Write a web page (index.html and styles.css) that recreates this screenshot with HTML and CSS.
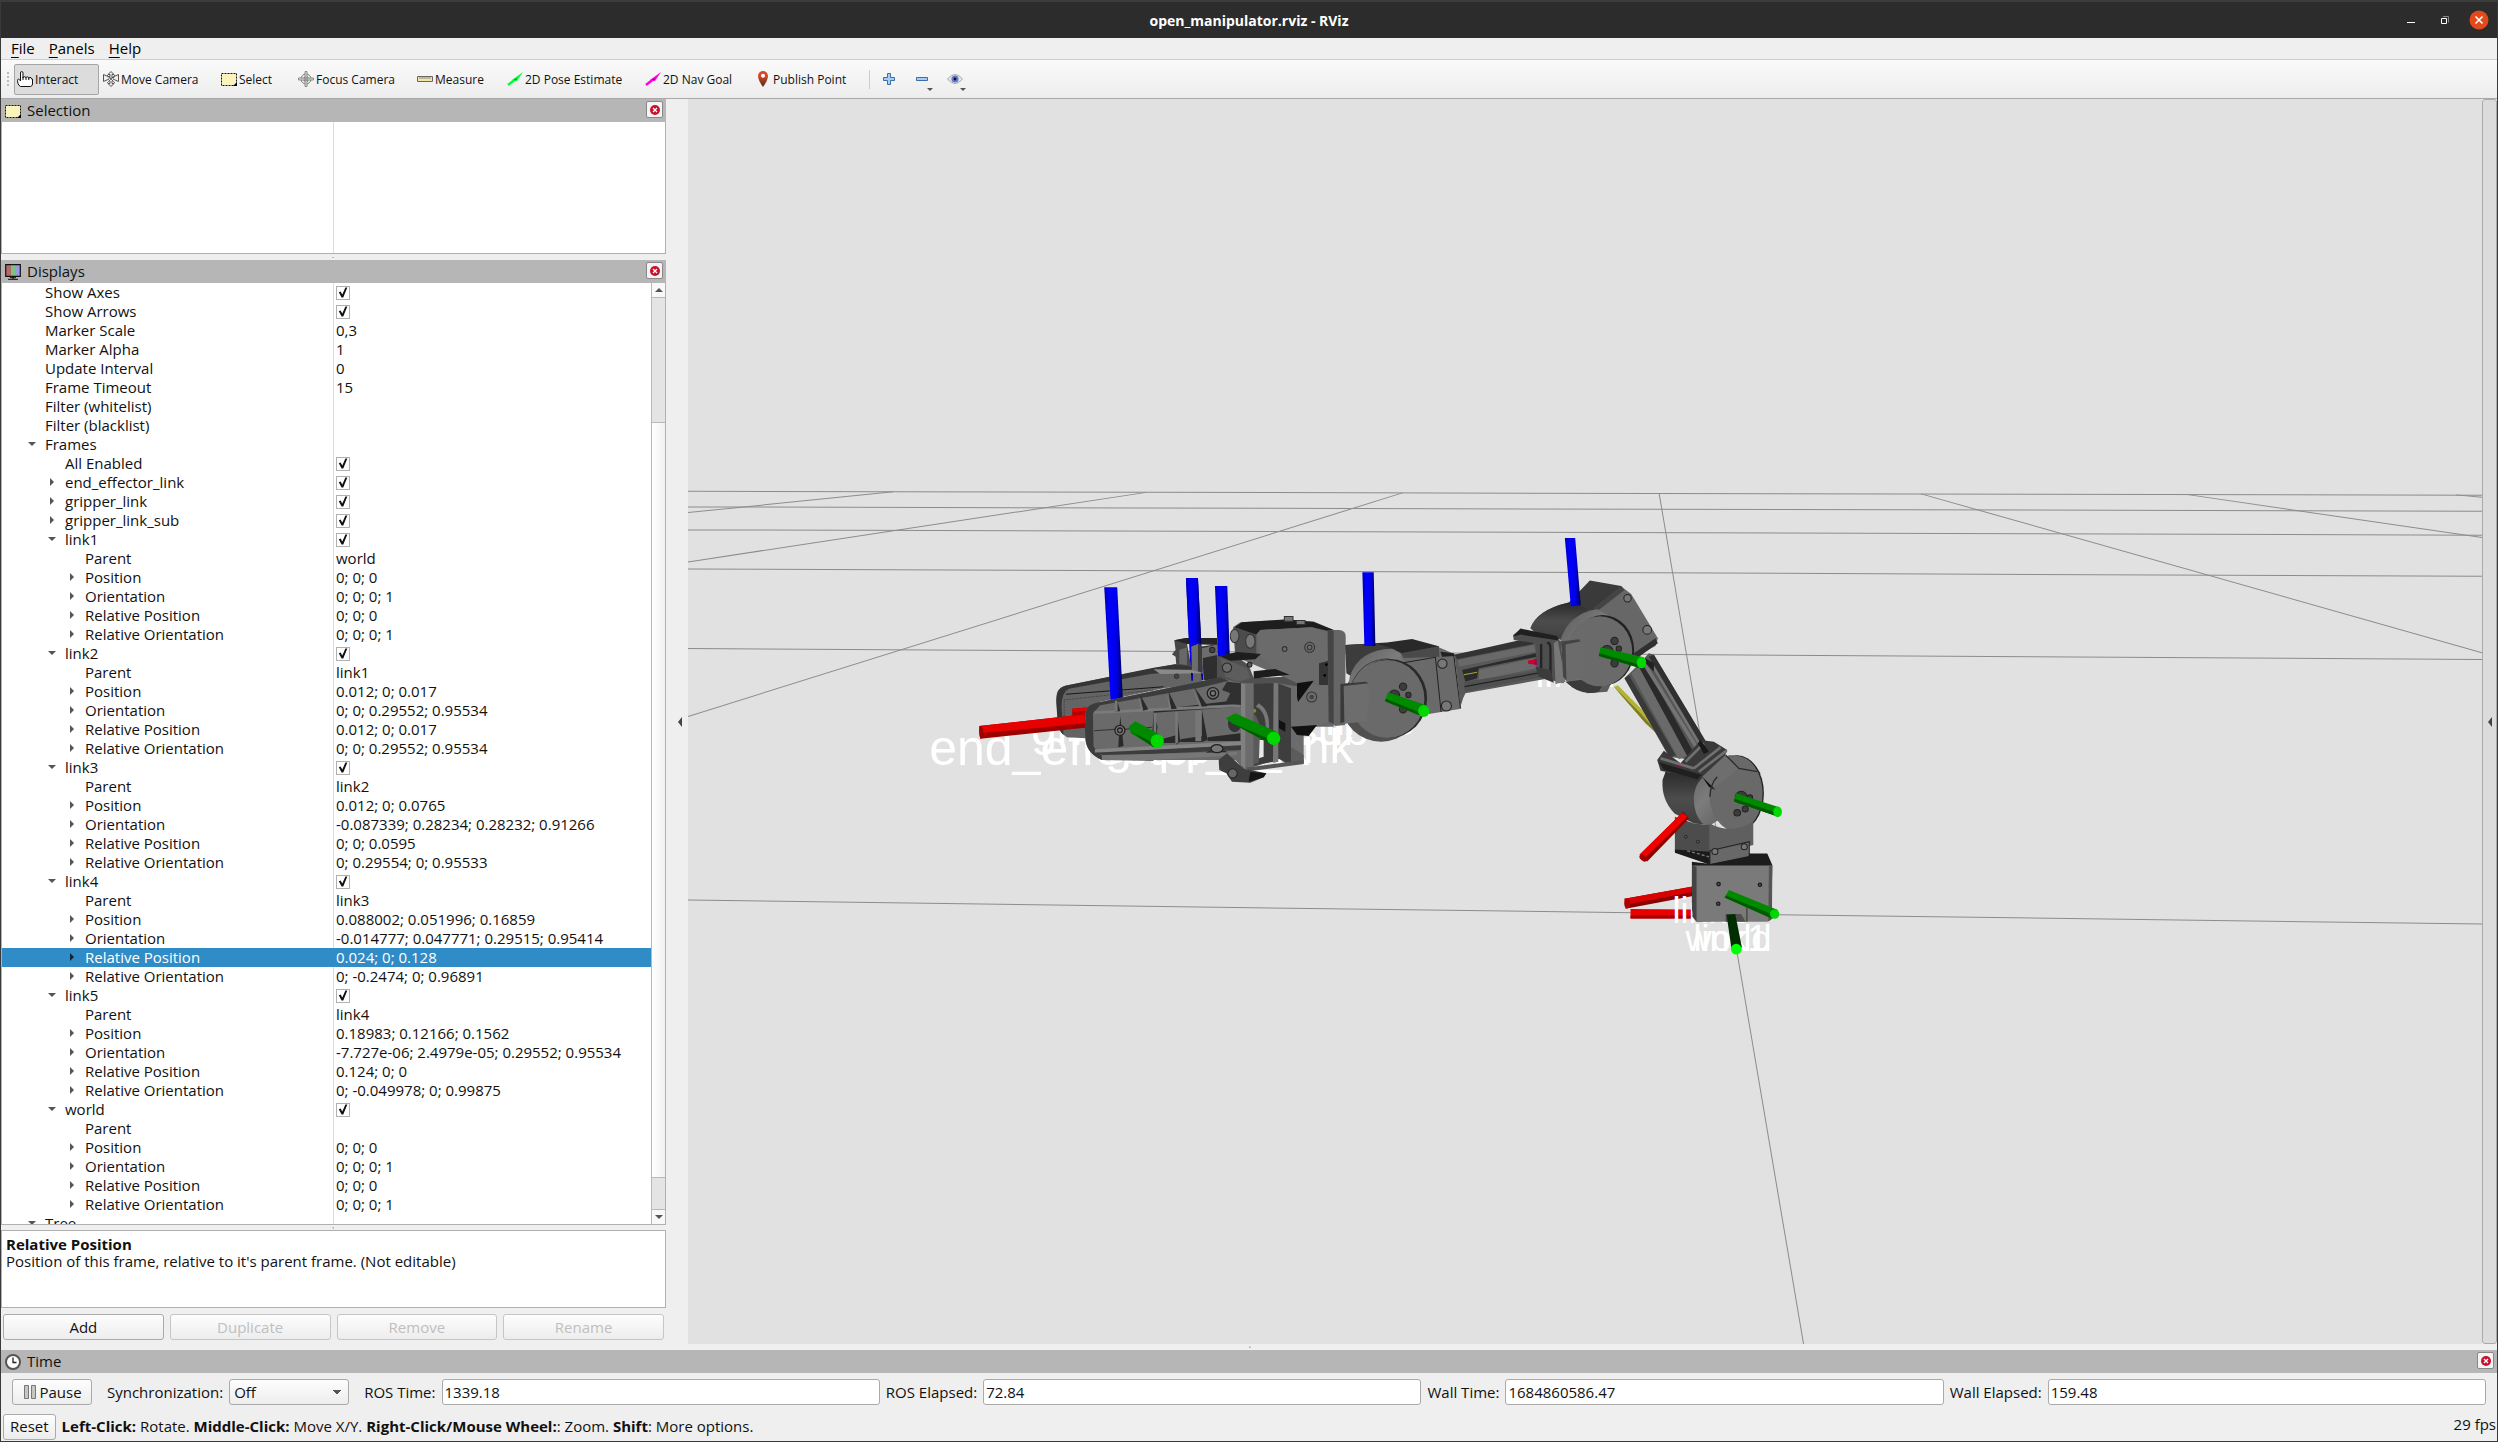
FILE: index.html
```html
<!DOCTYPE html>
<html lang="en">
<head>
<meta charset="utf-8">
<title>open_manipulator.rviz - RViz</title>
<link rel="stylesheet" href="styles.css">
</head>
<body>
<svg class="sprite" aria-hidden="true">
  <symbol id="i-select" viewBox="0 0 16 16"><path d="M.5 2.500h15v12H.5z" fill="#faf3bb"/><path d="M.5 2.500h15v12H.5z" fill="none" stroke="#111" stroke-dasharray="2 1"/><path d="M16 11v4h-4z" fill="#000"/></symbol>
  <symbol id="i-close" viewBox="0 0 16 16"><circle cx="8" cy="8" r="5" fill="#c8102e"/><path d="M6 6l4 4M10 6l-4 4" stroke="#fff" stroke-width="1.300"/></symbol>
</svg>
<div class="window">
  <header class="titlebar">
    <h1>open_manipulator.rviz - RViz</h1>
    <div class="window-buttons">
      <button aria-label="Minimize"><svg width="20" height="20" viewBox="0 0 20 20"><path d="M6 12.500h8" stroke="#fff"/></svg></button>
      <button aria-label="Restore"><svg width="20" height="20" viewBox="0 0 20 20"><path d="M6.500 8.500h5v5h-5z" fill="none" stroke="#fff"/><path d="M8 6.500h5.500v6" fill="none" stroke="#888"/></svg></button>
      <button aria-label="Close"><svg width="20" height="20" viewBox="0 0 20 20"><circle cx="10" cy="10" r="9.500" fill="#e2491b"/><path d="M6.500 6.500l7 7M13.500 6.500l-7 7" stroke="#fff" stroke-width="1.600"/></svg></button>
    </div>
  </header>

  <nav class="menubar"><a href="#file"><u>F</u>ile</a><a href="#panels"><u>P</u>anels</a><a href="#help"><u>H</u>elp</a></nav>

  <div class="toolbar">
    <span class="grip"></span>
    <button class="tool active"><svg width="16" height="16" viewBox="0 0 16 16"><path d="M3.500 10V2q0-1.500 1.200-1.500T6 2v5q0-1.300 1.400-1.300T9 7q0-1.200 1.300-1.200T11.800 7.500q.2-1.200 1.300-1.200 1.400.2 1.400 1.700h1v5q0 2-2 2.500h-10q-2-1-2.500-3L.5 9.500q0-1.300 1-1.300T3.500 10z" fill="#fff" stroke="#111"/><path d="M6 6v3M9 7v2M11.800 7v2" stroke="#111"/></svg>Interact</button>
    <button class="tool"><svg width="16" height="16" viewBox="0 0 16 16" fill="#eee" stroke="#555"><path d="M8 .5l3 3H9v3h2v-1l4.500-2v7L11 8.500h-.5L9 10v2.500h2l-3 3-3-3h2V10L5.500 8.500H5l-4.500 2v-7L5 5.500h2v-2H5z"/><path d="M4 4l8 8M12 4l-8 8M5 7h6" fill="none" stroke-width=".8"/></svg>Move Camera</button>
    <button class="tool"><svg width="16" height="16"><use href="#i-select"/></svg>Select</button>
    <button class="tool"><svg width="16" height="16" viewBox="0 0 16 16" fill="none" stroke="#777"><circle cx="8" cy="8" r="5"/><circle cx="8" cy="8" r="2.500"/><path d="M7 .5h2v15H7zM.5 7h15v2H.5z" fill="#ddd" stroke-width=".8"/></svg>Focus Camera</button>
    <button class="tool"><svg width="16" height="16" viewBox="0 0 16 16"><path d="M.5 5.500h15v5H.5z" fill="#efe6a8" stroke="#666"/><path d="M3 6v2M5 6v2M7 6v2M9 6v2M11 6v2M13 6v2" stroke="#777" stroke-width=".8"/></svg>Measure</button>
    <button class="tool"><svg width="16" height="16" viewBox="0 0 16 16"><path d="M1 14l7-5.500" stroke="#0f3" stroke-width="2.400"/><path d="M5 9L16 1l-6 9z" fill="#0f3"/><path d="M7 8l3-.5-1 2" fill="#074"/></svg>2D Pose Estimate</button>
    <button class="tool"><svg width="16" height="16" viewBox="0 0 16 16"><path d="M1 14l7-5.500" stroke="#f0d" stroke-width="2.400"/><path d="M5 9L16 1l-6 9z" fill="#f0d"/><path d="M7 8l3-.5-1 2" fill="#706"/></svg>2D Nav Goal</button>
    <button class="tool"><svg width="16" height="16" viewBox="0 0 16 16"><linearGradient id="pin" x2="0" y2="1"><stop offset=".3" stop-color="#d8492a"/><stop offset="1" stop-color="#4a2a10"/></linearGradient><path d="M8 16Q3 9 3 5a5 5 0 0 1 10 0q0 4-5 11z" fill="url(#pin)"/><circle cx="8" cy="4.800" r="2" fill="#fff"/></svg>Publish Point</button>
    <span class="separator"></span>
    <button class="tool icon-only" aria-label="Add tool"><svg width="16" height="16" viewBox="0 0 16 16"><path d="M6.500 2.500h3v4h4v3h-4v4h-3v-4h-4v-3h4z" fill="#a9cdf0" stroke="#3a6ea8"/></svg></button>
    <button class="tool icon-only drop" aria-label="Remove tool"><svg width="16" height="16" viewBox="0 0 16 16"><path d="M2.500 6.500h11v3h-11z" fill="#a9cdf0" stroke="#3a6ea8"/></svg></button>
    <button class="tool icon-only drop" aria-label="Toolbar visibility"><svg width="16" height="16" viewBox="0 0 16 16"><path d="M.5 8Q8-1 15.500 8 8 17 .5 8z" fill="#e6e6e6" stroke="#a8a8a8"/><circle cx="8" cy="8" r="3.600" fill="#5f7bd0"/><circle cx="8" cy="8" r="1.400" fill="#111"/></svg></button>
  </div>

  <main class="workspace">
    <aside class="sidebar">
      <section class="selection">
        <div class="dock-title"><svg width="16" height="16"><use href="#i-select"/></svg><h2>Selection</h2><button class="dock-close" aria-label="Close Selection"><svg width="16" height="16"><use href="#i-close"/></svg></button></div>
        <div class="selection-body"><div></div><div></div></div>
      </section>
      <div class="splitter"></div>
      <section class="displays">
        <div class="dock-title"><svg width="16" height="16" viewBox="0 0 16 16"><path d="M1 1h5v11H1z" fill="#b56a6a"/><path d="M6 1h5v11H6z" fill="#7ec47e"/><path d="M10 1h5v11h-5z" fill="#9a9ae0"/><path d="M.7.700h14.600v11.600H.7z" fill="none" stroke="#111" stroke-width="1.200"/><path d="M8 12v3M3 15.300h10M5 13.700h6" stroke="#111"/></svg><h2>Displays</h2><button class="dock-close" aria-label="Close Displays"><svg width="16" height="16"><use href="#i-close"/></svg></button></div>
        <div class="tree">
          <div class="tree-view">
          <table>
            <colgroup><col class="name-col"><col></colgroup>
            <tbody>
            <tr><td class="l1">Show Axes</td><td><input type="checkbox" checked aria-label="Show Axes"></td></tr>
            <tr><td class="l1">Show Arrows</td><td><input type="checkbox" checked aria-label="Show Arrows"></td></tr>
            <tr><td class="l1">Marker Scale</td><td>0,3</td></tr>
            <tr><td class="l1">Marker Alpha</td><td>1</td></tr>
            <tr><td class="l1">Update Interval</td><td>0</td></tr>
            <tr><td class="l1">Frame Timeout</td><td>15</td></tr>
            <tr><td class="l1">Filter (whitelist)</td><td></td></tr>
            <tr><td class="l1">Filter (blacklist)</td><td></td></tr>
            <tr><td class="l1 open">Frames</td><td></td></tr>
            <tr><td class="l2">All Enabled</td><td><input type="checkbox" checked aria-label="All Enabled"></td></tr>
            <tr><td class="l2 shut">end_effector_link</td><td><input type="checkbox" checked aria-label="end_effector_link"></td></tr>
            <tr><td class="l2 shut">gripper_link</td><td><input type="checkbox" checked aria-label="gripper_link"></td></tr>
            <tr><td class="l2 shut">gripper_link_sub</td><td><input type="checkbox" checked aria-label="gripper_link_sub"></td></tr>
            <tr><td class="l2 open">link1</td><td><input type="checkbox" checked aria-label="link1"></td></tr>
            <tr><td class="l3">Parent</td><td>world</td></tr>
            <tr><td class="l3 shut">Position</td><td>0; 0; 0</td></tr>
            <tr><td class="l3 shut">Orientation</td><td>0; 0; 0; 1</td></tr>
            <tr><td class="l3 shut">Relative Position</td><td>0; 0; 0</td></tr>
            <tr><td class="l3 shut">Relative Orientation</td><td>0; 0; 0; 1</td></tr>
            <tr><td class="l2 open">link2</td><td><input type="checkbox" checked aria-label="link2"></td></tr>
            <tr><td class="l3">Parent</td><td>link1</td></tr>
            <tr><td class="l3 shut">Position</td><td>0.012; 0; 0.017</td></tr>
            <tr><td class="l3 shut">Orientation</td><td>0; 0; 0.29552; 0.95534</td></tr>
            <tr><td class="l3 shut">Relative Position</td><td>0.012; 0; 0.017</td></tr>
            <tr><td class="l3 shut">Relative Orientation</td><td>0; 0; 0.29552; 0.95534</td></tr>
            <tr><td class="l2 open">link3</td><td><input type="checkbox" checked aria-label="link3"></td></tr>
            <tr><td class="l3">Parent</td><td>link2</td></tr>
            <tr><td class="l3 shut">Position</td><td>0.012; 0; 0.0765</td></tr>
            <tr><td class="l3 shut">Orientation</td><td>-0.087339; 0.28234; 0.28232; 0.91266</td></tr>
            <tr><td class="l3 shut">Relative Position</td><td>0; 0; 0.0595</td></tr>
            <tr><td class="l3 shut">Relative Orientation</td><td>0; 0.29554; 0; 0.95533</td></tr>
            <tr><td class="l2 open">link4</td><td><input type="checkbox" checked aria-label="link4"></td></tr>
            <tr><td class="l3">Parent</td><td>link3</td></tr>
            <tr><td class="l3 shut">Position</td><td>0.088002; 0.051996; 0.16859</td></tr>
            <tr><td class="l3 shut">Orientation</td><td>-0.014777; 0.047771; 0.29515; 0.95414</td></tr>
            <tr class="selected"><td class="l3 shut">Relative Position</td><td>0.024; 0; 0.128</td></tr>
            <tr><td class="l3 shut">Relative Orientation</td><td>0; -0.2474; 0; 0.96891</td></tr>
            <tr><td class="l2 open">link5</td><td><input type="checkbox" checked aria-label="link5"></td></tr>
            <tr><td class="l3">Parent</td><td>link4</td></tr>
            <tr><td class="l3 shut">Position</td><td>0.18983; 0.12166; 0.1562</td></tr>
            <tr><td class="l3 shut">Orientation</td><td>-7.727e-06; 2.4979e-05; 0.29552; 0.95534</td></tr>
            <tr><td class="l3 shut">Relative Position</td><td>0.124; 0; 0</td></tr>
            <tr><td class="l3 shut">Relative Orientation</td><td>0; -0.049978; 0; 0.99875</td></tr>
            <tr><td class="l2 open">world</td><td><input type="checkbox" checked aria-label="world"></td></tr>
            <tr><td class="l3">Parent</td><td></td></tr>
            <tr><td class="l3 shut">Position</td><td>0; 0; 0</td></tr>
            <tr><td class="l3 shut">Orientation</td><td>0; 0; 0; 1</td></tr>
            <tr><td class="l3 shut">Relative Position</td><td>0; 0; 0</td></tr>
            <tr><td class="l3 shut">Relative Orientation</td><td>0; 0; 0; 1</td></tr>
            <tr><td class="l1 open">Tree</td><td></td></tr>
            </tbody>
          </table>
          </div>
          <div class="scrollbar"><span class="step up"></span><span class="track before"></span><span class="thumb"></span><span class="track after"></span><span class="step down"></span></div>
        </div>
        <div class="splitter small"></div>
        <div class="description"><b>Relative Position</b><p>Position of this frame, relative to it's parent frame. (Not editable)</p></div>
        <div class="display-buttons"><button class="btn">Add</button><button class="btn" disabled>Duplicate</button><button class="btn" disabled>Remove</button><button class="btn" disabled>Rename</button></div>
      </section>
    </aside>
    <button class="collapse" aria-label="Hide left dock"><i></i></button>
    <section class="viewport" aria-label="3D view">
      <svg viewBox="688 99 1793 1245" preserveAspectRatio="xMidYMid slice">
        <defs>
          <linearGradient id="cyl" x2="0" y2="1"><stop offset="0" stop-color="#2a2a2a"/><stop offset=".5" stop-color="#4c4c4c"/><stop offset="1" stop-color="#404040"/></linearGradient>
          <linearGradient id="blue"><stop offset="0" stop-color="#0000b8"/><stop offset=".3" stop-color="#00f"/><stop offset=".65" stop-color="#0000e8"/><stop offset="1" stop-color="#000050"/></linearGradient>
          <linearGradient id="rim" x2="1" y2="1"><stop offset="0" stop-color="#5c5c5c"/><stop offset=".4" stop-color="#7c7c7c"/><stop offset="1" stop-color="#4c4c4c"/></linearGradient>
        </defs>
        <g stroke="#8c8c8c" fill="none">
          <path d="M688 491.500L2481 495.300M688 507L2481 511.300M688 530L2481 535.300M688 569L2481 576.300M688 648.500L2481 659.500M688 900L2481 924"/>
          <path d="M688 512.700L893 492M688 562L1146 492.500M688 716.500L1402 493M1658.600 493.500L1803 1344M1920.400 494L2481 652.700M2185.400 494.500L2481 537.500M2454.800 495L2481 497.500"/>
        </g>
        <g class="labels">
          <text class="fs50" x="929" y="765">end_effector_link</text>
          <text class="fs48" x="1105" y="763">gripper_link</text>
          <text class="fs46" x="1031" y="745">gripper_link_sub</text>
          <text class="fs44" x="1325" y="735">link5</text>
          <text class="fs40" x="1535" y="687">link4</text>
        </g>
        <g transform="translate(920 540) scale(.333333)">
          <path d="M797 114L833 114 849 420 812 420z" fill="url(#blue)"/>
          <path d="M884 138L921 138 931 420 896 420z" fill="url(#blue)"/>
          <!-- far finger -->
          <path d="M409 470Q408 445 435 437L700 385 765 373 830 377 850 395 846 430 730 445 540 485 498 540 498 595 440 592Q412 575 412 540z" fill="#646464"/>
          <path d="M409 500Q403 445 435 437L700 383 765 373 830 377 840 388 690 402 446 446Q425 455 424 500L430 585Q412 570 412 540z" fill="#353535"/>
          <path d="M700 388L836 390 848 400 720 402z" fill="#8a8a8a"/><circle cx="769" cy="409" r="7" fill="#444" stroke="#222" stroke-width="2"/>
          <path d="M437 463L730 440" fill="none" stroke="#181818" stroke-width="3"/><path d="M432 560V480L700 450" fill="none" stroke="#333" stroke-width="2" stroke-dasharray="5 3"/>
          <path d="M456 506L560 497V530L456 532z" fill="#b00000"/><path d="M456 506L560 497V508L456 515z" fill="#e60000"/>
          <path d="M552 142L591 142 608 480 571 480z" fill="url(#blue)"/>
          <!-- servo behind the fingers -->
          <path d="M762 301L797 294 813 380 768 374 766 350 755 343 766 330z" fill="#464646"/><path d="M762 301L797 294 890 294 892 315 800 312z" fill="#242424"/>
          <path d="M777 330L800 322V375L777 372z" fill="#686868"/>
          <path d="M797 114L833 114 843 310 806 310z" fill="url(#blue)"/>
          <path d="M845 320L892 312V425L850 420z" fill="#2e2e2e"/><path d="M813 320L833 312 846 320V398L815 390z" fill="#6d6d6d"/><path d="M833 314L846 320V398L833 394z" fill="#3c3c3c"/><path d="M845 325L890 314V345L845 355z" fill="#6d6d6d"/><circle cx="876" cy="330" r="8" fill="#444" stroke="#222" stroke-width="3"/>
          <path d="M812 398L818 400V422H813zM842 400L848 402V420H844z" fill="#0000a0"/>
          <!-- gripper motor housing -->
          <path d="M938 262L960 247 1095 240 1180 245 1240 270 1240 560 1130 560 1110 420 945 350z" fill="#686868"/>
          <path d="M942 262L965 247 1100 238 1180 246 1240 270 1230 275 1175 262 1020 270 1008 285z" fill="#1e1e1e"/>
          <path d="M942 262L1008 284V345L945 340z" fill="#4c4c4c"/><path d="M1008 284L1020 270 1175 262 1220 278V365L1196 370 1196 430 1100 420 1020 350z" fill="#6b6b6b"/>
          <g fill="#777" stroke="#333" stroke-width="3"><ellipse cx="943" cy="288" rx="13" ry="20"/><ellipse cx="990" cy="304" rx="14" ry="21"/><path d="M1092 230h26v14h-26zM1128 242h26v12h-26z"/></g>
          <g fill="none" stroke="#303030" stroke-width="3"><circle cx="1093" cy="327" r="7"/><circle cx="1168" cy="322" r="15"/><circle cx="1168" cy="322" r="7"/></g>
          <path d="M1196 370L1224 362V435H1196z" fill="#343434"/><circle cx="1218" cy="374" r="4"/><circle cx="1213" cy="406" r="4"/>
          <path d="M890 350L935 340 985 375 1000 415 1090 410 1130 430V640L970 690 900 600 890 430z" fill="#505050"/>
          <path d="M898 348L950 336 1022 342 1005 358 930 362zM1000 394L1065 387 1108 404 1000 416z" fill="#1d1d1d"/>
          <path d="M900 355L945 370 980 385 990 415 955 425 915 410z" fill="#5d5d5d"/><circle cx="920" cy="383" r="14" fill="#696969" stroke="#222" stroke-width="3"/><circle cx="988" cy="374" r="7" fill="#555" stroke="#222" stroke-width="3"/>
          <path d="M1072 430L1140 440 1185 432 1228 440V545L1150 565 1150 670 1100 675 1072 650z" fill="#6c6c6c"/>
          <path d="M1072 430L1112 445V675L1072 655z" fill="#3e3e3e"/><path d="M1130 430L1180 422 1133 486 1130 470zM1112 560L1190 555 1165 588 1130 585z" fill="#111"/>
          <circle cx="1174" cy="471" r="15" fill="none" stroke="#333" stroke-width="3"/><circle cx="1174" cy="471" r="7" fill="#444"/>
          <path d="M1076 540L1095 550V575L1076 565z" fill="#111"/><path d="M1112 620L1150 645V670L1112 674z" fill="#5c5c5c"/>
          <path d="M1000 432L1060 430V665L1000 675z" fill="#3c3c3c"/><path d="M1000 520Q1022 540 1020 600L1015 668 1000 672z" fill="#5a5a5a"/><path d="M1018 600H1030V650L1016 655z" fill="#e8e8e8"/><path d="M1006 500Q1035 510 1036 560L1046 570Q1050 510 1015 490z" fill="#777"/><circle cx="1002" cy="512" r="6" fill="#86862a"/>
          <path d="M1060 428L1074 430V665L1058 668z" fill="#777"/>
          <path d="M1222 270H1258Q1276 272 1276 290L1274 555 1245 558 1225 545z" fill="#666"/><path d="M1222 270L1240 272V552L1225 545z" fill="#444"/>
          <!-- near finger -->
          <path d="M494 545L497 510Q505 492 530 488L830 425 900 413 965 430 975 470V690L945 660 545 660Q500 640 496 600z" fill="#6a6a6a"/>
          <path d="M494 560L498 510Q505 492 530 488L830 427 900 412 925 422 845 442 540 496 518 520 520 620 548 650 700 652V662L545 660Q500 640 496 600z" fill="#3c3c3c"/>
          <path d="M700 510L955 480 960 500 700 518z" fill="#2b2b2b"/><path d="M522 514L960 492V501L522 522z" fill="#7b7b7b"/>
          <g fill="#2a2a2a"><path d="M590 478L600 514H584zM660 465L684 508 668 512zM745 455L770 506 752 508zM822 440L862 498 845 500zM600 528L610 618 594 622zM700 518L712 560 705 612 694 614zM770 515L780 605 768 614zM845 510L862 600 845 606zM850 645L880 618 930 640z"/><path d="M715 600L770 585V609H715zM780 598L845 588V606H780zM862 592L960 580V603H862z"/></g>
          <g fill="#777"><path d="M584 482h8v32h-8zM655 468l14 42h-8zM740 458l14 50h-8zM815 442l30 58h-8zM700 520h8v90h-8zM765 515h8v95h-8zM825 512h18v92h-18z"/></g>
          <path d="M524 628L965 604V616L524 638z" fill="#858585"/><path d="M524 638L965 616V630L560 648z" fill="#3c3c3c"/><path d="M545 645L950 636V646L700 660H545z" fill="#777"/>
          <path d="M522 572L586 568M612 568L696 562" stroke="#333" stroke-width="3"/><g fill="#777" stroke="#222" stroke-width="4"><circle cx="599" cy="571" r="15"/><circle cx="599" cy="571" r="7"/><circle cx="878" cy="460" r="17"/><circle cx="878" cy="460" r="8"/><ellipse cx="890" cy="626" rx="18" ry="12"/></g>
          <path d="M920 425L962 430V495L915 490 930 460 905 450z" fill="#303030"/><ellipse cx="943" cy="550" rx="20" ry="26" fill="#333"/>
          <path d="M962 430H1000V680L970 690 962 640z" fill="#6b6b6b"/><path d="M962 430L975 432V688L962 675z" fill="#808080"/><path d="M975 683L1150 660V672L985 694z" fill="#555"/>
          <path d="M895 660L920 640 970 686 1038 700 1030 712 990 728 935 725 918 700 897 690z" fill="#3e3e3e"/><path d="M990 696L1038 700 1030 712 985 725z" fill="#151515"/><circle cx="937" cy="700" r="14" fill="#666" stroke="#222" stroke-width="3"/>
          <path d="M177 558L493 523 495 563 180 596z" fill="#9d0000"/><path d="M177 558L493 523 494 550 179 580z" fill="#e80000"/><ellipse cx="183" cy="577" rx="6" ry="19" fill="#a00000"/>
          <path d="M917 535L945 520 1070 576 1055 614 935 550z" fill="#008a00"/><path d="M935 550L1055 600V614z" fill="#005a00"/><ellipse cx="1060" cy="595" rx="20" ry="20" fill="#00d800"/>
          <path d="M625 560L645 544 720 584 700 622 632 580z" fill="#008a00"/><path d="M632 575L700 608V622z" fill="#005a00"/><circle cx="711" cy="603" r="20" fill="#00d800"/>
        </g>
        <g transform="translate(1320 510) scale(.333333)">
          <!-- joint 5 -->
          <path d="M75 405L200 398 275 387 355 409 357 440 200 520 80 490z" fill="#292929"/><path d="M75 405L165 400 230 420Q130 425 95 500L78 490z" fill="#3c3c3c"/>
          <ellipse cx="182" cy="580" rx="118" ry="115" fill="#505050"/><path d="M88 500Q115 418 215 416L265 440Q290 460 300 500L215 600 80 560z" fill="url(#rim)"/>
          <path d="M240 440L355 412 402 432 422 596 325 612 290 500z" fill="#6a6a6a"/><path d="M240 430L355 409 357 440 250 444z" fill="#4a4a4a"/><path d="M240 460L345 442 362 606M400 436L420 594" fill="none" stroke="#222" stroke-width="3"/>
          <ellipse cx="208" cy="565" rx="112" ry="118" fill="#292929"/><ellipse cx="201" cy="567" rx="111" ry="117" fill="#6a6a6a"/><path d="M95 520Q125 448 205 446" fill="none" stroke="#444" stroke-width="3"/>
          <path d="M60 522L135 515 148 545 140 634 66 642z" fill="#6d6d6d"/><path d="M60 522L135 515 145 520 70 528 72 636 60 640z" fill="#3a3a3a"/>
          <g fill="#3c3c3c" stroke="#222" stroke-width="3"><circle cx="248" cy="530" r="11"/><circle cx="264" cy="555" r="8"/><circle cx="248" cy="598" r="11"/><circle cx="222" cy="556" r="16"/><circle cx="366" cy="461" r="14" fill="#777"/><circle cx="378" cy="588" r="15" fill="#777"/></g>
          <path d="M360 425L400 430 405 438 365 440z" fill="#222"/>
          <!-- upper beam -->
          <path d="M402 434L640 390 668 400 670 508 435 550 428 565 420 590z" fill="#595959"/><path d="M402 434L600 390 640 390 640 402 410 448z" fill="#333"/><path d="M412 450L640 405 645 425 415 470z" fill="#696969"/><path d="M425 480L645 430 650 440 475 475 470 505 435 515z" fill="#2b2b2b"/><path d="M475 480L640 445 648 475 475 510z" fill="#6b6b6b"/><path d="M432 516L650 482 655 502 433 546z" fill="#505050"/><path d="M432 530L660 488" stroke="#222" stroke-width="4"/><path d="M430 494L470 487" stroke="#aaa334" stroke-width="3"/>
          <path d="M622 452L660 444 658 464 624 462z" fill="#d0002a"/><path d="M645 447L660 444 658 464 640 464z" fill="#a00060"/>
          <!-- joint 4 -->
          <path d="M630 355Q650 300 745 278L808 212 902 228 912 245 820 310 730 390z" fill="#3a3a3a"/><path d="M630 355Q650 300 745 278L800 295Q740 330 722 390L640 365z" fill="url(#cyl)"/>
          <path d="M820 295L902 230 932 252 1012 385 1005 408 940 440 850 400z" fill="#676767"/><path d="M820 295L902 228 912 240 825 308z" fill="#444"/><path d="M940 430L1005 385 1012 400 945 448z" fill="#303030"/>
          <path d="M578 375L600 358 700 380 722 395 730 520 690 510 650 470 645 400 580 390z" fill="#4e4e4e"/><path d="M578 380L600 356 710 378 715 392 600 374z" fill="#202020"/><path d="M680 400Q690 395 690 420V510M662 402V490" fill="none" stroke="#242424" stroke-width="7"/><path d="M645 470L690 480 700 518 655 500z" fill="#3b3b3b"/><path d="M700 400L712 392 735 515 705 522z" fill="#777"/>
          <path d="M720 390Q745 310 830 298L890 330 930 400 860 545 800 550 740 515z" fill="url(#rim)"/><path d="M735 515L860 500 835 545Q780 560 735 515z" fill="#3b3b3b"/>
          <ellipse cx="847" cy="421" rx="94" ry="106" fill="#222"/><ellipse cx="838" cy="424" rx="97" ry="105" fill="#6a6a6a"/>
          <path d="M722 395L775 388 790 420 788 500 740 515 728 500z" fill="#6b6b6b"/><path d="M722 395L775 388 780 395 735 404 738 512 728 500z" fill="#444"/>
          <g fill="#3c3c3c" stroke="#222" stroke-width="3"><circle cx="882" cy="393" r="11"/><circle cx="895" cy="416" r="8"/><circle cx="882" cy="460" r="11"/><circle cx="860" cy="425" r="18"/><circle cx="921" cy="265" r="11" fill="#777"/><circle cx="980" cy="360" r="13" fill="#777"/></g>
          <!-- forearm beams and cable -->
          <path d="M880 530L892 526 1010 645 1030 690 975 640z" fill="#b3b33c"/><path d="M880 530L960 610 1030 690 975 640z" fill="#7e7e20"/>
          <path d="M912 505L950 468 985 430 1000 434 1152 690 1120 750 1045 740z" fill="#555"/><path d="M912 505L925 495 1065 735 1048 742z" fill="#393939"/><path d="M932 490L955 470 1105 735 1075 748z" fill="#6a6a6a"/><path d="M955 470L970 458 1115 720 1100 738z" fill="#2a2a2a"/><path d="M972 462L1128 712M1000 470L1140 705" stroke="#747474" stroke-width="11"/><path d="M985 440L1000 434 1155 692 1140 700z" fill="#303030"/><path d="M975 445L1000 460 1000 485 975 460z" fill="#222"/>
          <!-- joint 2 -->
          <path d="M1035 785L1140 800 1170 830V945L1120 940 1062 910Q1022 870 1026 810z" fill="url(#cyl)"/>
          <path d="M1010 750L1030 722 1080 760 1140 690 1180 695 1220 720 1200 770 1150 810 1020 782z" fill="#3a3a3a"/><path d="M1015 757L1145 795 1130 808 1030 780z" fill="#1f1f1f"/><path d="M1020 745L1120 775M1120 775L1200 712M1135 785L1218 722M1095 755L1150 700" stroke="#707070" stroke-width="8"/><path d="M1132 700L1140 690 1165 725 1150 732z" fill="#1a1a1a"/><path d="M1068 765L1082 770 1076 774z" fill="#a00060"/>
          <path d="M1120 860Q1125 810 1160 795L1225 735Q1290 735 1320 790L1290 870 1170 945 1145 940Q1118 910 1120 860z" fill="url(#rim)"/>
          <ellipse cx="1250" cy="850" rx="80" ry="114" fill="#232323"/><ellipse cx="1246" cy="850" rx="80" ry="113" fill="#696969"/><path d="M1145 800L1215 735 1255 775 1200 820 1170 835z" fill="#6e6e6e"/><path d="M1145 800L1185 840 1165 830z" fill="#111"/><path d="M1168 860Q1170 820 1190 800M1215 735L1255 775 1310 785" fill="none" stroke="#2c2c2c" stroke-width="4"/>
          <g fill="#3c3c3c" stroke="#222" stroke-width="3"><circle cx="1262" cy="862" r="18"/><circle cx="1274" cy="897" r="9"/><circle cx="1250" cy="908" r="10"/><circle cx="1288" cy="862" r="8"/></g>
          <path d="M1063 920L1120 940 1168 945V1062L1063 1020z" fill="#4c4c4c"/><path d="M1063 1018L1168 1025 1168 1064 1063 1028z" fill="#1a1a1a"/><path d="M1100 1022L1165 1040" stroke="#777" stroke-width="4" stroke-dasharray="9 6"/>
          <path d="M1168 940Q1230 975 1298 935V1005L1286 1008V1040L1168 1064z" fill="#5f5f5f"/><path d="M1168 1022L1286 995V1042L1168 1064z" fill="#686868" stroke="#222" stroke-width="3"/><g fill="#777" stroke="#222" stroke-width="3"><circle cx="1183" cy="1024" r="9"/><circle cx="1271" cy="1010" r="9"/><circle cx="1096" cy="980" r="4"/><circle cx="1132" cy="995" r="4"/></g>
          <path d="M1088 905L1105 925 980 1054 957 1034z" fill="#8c0000"/><path d="M1085 908L1100 920 970 1047 957 1034z" fill="#f00000"/><ellipse cx="968" cy="1044" rx="8" ry="13" transform="rotate(-48 968 1044)" fill="#a00000"/>
          <path d="M912 1166L1125 1128V1156L915 1196z" fill="#8c0000"/><path d="M912 1166L1125 1128V1144L914 1184z" fill="#d80000"/><ellipse cx="920" cy="1180" rx="9" ry="15" fill="#b00000"/>
          <path d="M930 1197L1120 1198V1225H930z" fill="#e80000"/><path d="M930 1216L1120 1216V1225H930z" fill="#a80000"/>
        </g>
        <g class="labels">
          <text class="fs36" x="1672" y="923">link2</text>
          <text class="fs36" x="1685" y="951">world</text>
          <text class="fs36" x="1693" y="951">link1</text>
        </g>
        <g transform="translate(1320 510) scale(.333333)">
          <!-- base servo -->
          <path d="M1114 1055L1170 1062 1285 1038V1030H1340L1355 1065 1354 1225 1130 1235 1114 1200z" fill="#1c1c1c"/><path d="M1116 1066H1355L1352 1228 1340 1235H1128L1116 1220z" fill="#7a7a7a"/><path d="M1116 1066L1128 1070V1235L1116 1220z" fill="#444"/><path d="M1345 1066H1355L1352 1228 1343 1234z" fill="#555"/><path d="M1279 1190V1235" stroke="#333" stroke-width="3"/><path d="M1215 1235V1212H1262L1275 1235z" fill="#505050"/>
          <g fill="#555" stroke="#1c1c1c" stroke-width="4"><circle cx="1194" cy="1122" r="5"/><circle cx="1318" cy="1124" r="5"/><circle cx="1193" cy="1181" r="5"/></g>
          <path d="M1218 1214L1244 1212 1264 1312 1233 1318z" fill="#002e00"/><circle cx="1247" cy="1317" r="16" fill="#0f0"/>
          <path d="M1212 1162L1225 1140 1372 1200 1355 1226z" fill="#008a00"/><path d="M1212 1162L1216 1156 1358 1214 1355 1226z" fill="#005a00"/><circle cx="1362" cy="1212" r="14" fill="#00d800"/>
          <path d="M1240 874L1246 850 1378 892 1366 918z" fill="#008a00"/><path d="M1240 874L1242 866 1368 908 1366 918z" fill="#005a00"/><ellipse cx="1371" cy="905" rx="13" ry="16" fill="#00d800"/>
          <path d="M835 438L840 412 970 442 958 474z" fill="#008a00"/><path d="M835 438L836 430 958 464V474z" fill="#005a00"/><ellipse cx="963" cy="458" rx="14" ry="17" fill="#00d800"/>
          <path d="M194 574L202 547 318 586 302 618z" fill="#008a00"/><path d="M194 574L196 566 302 608V618z" fill="#005a00"/><ellipse cx="310" cy="603" rx="17" ry="18" fill="#00d800"/>
          <path d="M126 187L160 187 165 408 132 408z" fill="url(#blue)"/><path d="M733 84L764 84 781 286 751 290z" fill="url(#blue)"/>
        </g>
      </svg>
    </section>
    <button class="collapse right" aria-label="Show right dock"><i></i></button>
  </main>

  <div class="splitter"></div>
  <section class="time">
    <div class="dock-title"><svg width="16" height="16" viewBox="0 0 16 16"><circle cx="8" cy="8" r="7" fill="#fff" stroke="#555" stroke-width="2"/><path d="M8 3.500V8.500h3.500" fill="none" stroke="#222" stroke-width="1.300"/></svg><h2>Time</h2><button class="dock-close" aria-label="Close Time"><svg width="16" height="16"><use href="#i-close"/></svg></button></div>
    <div class="time-row">
      <button class="btn pause"><svg width="16" height="16" viewBox="0 0 16 16"><path d="M2.500 1.500h4v13h-4zM9.500 1.500h4v13h-4z" fill="#c4c8c0" stroke="#777"/></svg>Pause</button>
      <label for="sync">Synchronization:</label><select id="sync"><option>Off</option></select>
      <label for="ros-time">ROS Time:</label><input id="ros-time" type="text" value="1339.18">
      <label for="ros-elapsed">ROS Elapsed:</label><input id="ros-elapsed" type="text" value="72.84">
      <label for="wall-time">Wall Time:</label><input id="wall-time" type="text" value="1684860586.47">
      <label for="wall-elapsed">Wall Elapsed:</label><input id="wall-elapsed" type="text" value="159.48">
    </div>
  </section>
  <footer class="status"><button class="btn">Reset</button><p><b>Left-Click:</b> Rotate. <b>Middle-Click:</b> Move X/Y. <b>Right-Click/Mouse Wheel:</b>: Zoom. <b>Shift</b>: More options.</p><span class="fps">29 fps</span></footer>
</div>
</body>
</html>
```
FILE: styles.css
```css
* { box-sizing: border-box; }
body { margin: 0; background: #333; color: #111; font: 15px/19px "Open Sans", "Noto Sans", sans-serif; }
h1, h2, p { margin: 0; font-size: inherit; font-weight: 400; }
button, input, select { margin: 0; font: inherit; color: inherit; }
svg { display: block; flex: none; }
.sprite { position: absolute; width: 0; height: 0; }

.window { display: flex; flex-direction: column; height: 100vh; min-height: 600px; border: solid #3a3a3a; border-width: 0 1px 1px; background: #efefef; }

.titlebar { flex: none; height: 38px; display: grid; grid-template-columns: 1fr auto 1fr; align-items: center; background: #2c2c2c; border-top: 2px solid #3c3c3c; color: #fff; }
.titlebar h1 { grid-column: 2; font-size: 14px; font-weight: 700; }
.window-buttons { justify-self: end; display: flex; gap: 14px; padding-right: 8px; }
.window-buttons button { padding: 0; border: 0; background: none; }

.menubar { flex: none; height: 22px; display: flex; align-items: center; gap: 14px; padding-left: 10px; border-bottom: 1px solid #cfcfcf; color: #000; }
.menubar a { color: inherit; text-decoration: none; }
.menubar u { text-underline-offset: 3px; }

.toolbar { flex: none; height: 39px; display: grid; grid-template-columns: 13px 86px 118px 77px 119px 90px 138px 110px 117px 1px 33px 33px 33px; align-items: center; border-bottom: 1px solid #a8a8a8; background: linear-gradient(#fafafa, #ededed); font-size: 12px; }
.grip { justify-self: center; width: 4px; height: 17px; background: radial-gradient(circle, #bbb 1px, transparent 1px) 0 0 / 4px 4px; }
.tool { display: flex; align-items: center; gap: 2px; height: 31px; padding: 0 2px; border: 1px solid transparent; border-radius: 2px; background: none; white-space: nowrap; }
.tool.active { margin-right: 1px; border-color: #a6a6a6; background: #dcdcdc; }
.separator { height: 19px; background: #ccc; }
.icon-only { justify-content: center; position: relative; padding: 0 0 0 5px; }
.drop::after { content: ""; position: absolute; right: 2px; bottom: 3px; border: 3px solid transparent; border-top-color: #555; border-bottom: 0; }

.workspace { flex: 1; min-height: 0; display: flex; }
.sidebar { flex: none; width: 665px; display: flex; flex-direction: column; }
.dock-title { flex: none; height: 23px; display: flex; align-items: center; gap: 6px; padding: 0 3px 0 4px; background: #b6b6b6; }
.dock-close { margin: 0 0 3px auto; width: 17px; height: 17px; padding: 0; display: grid; place-items: center; border: 1px solid #888; border-radius: 2px; background: #f4f4f4; }
.selection-body { height: 132px; display: grid; grid-template-columns: 332px 1fr; background: #fff; border: solid #b0b0b0; border-width: 0 1px 1px; }
.selection-body div:first-child { border-right: 1px solid #dcdcdc; }
.splitter { flex: none; height: 6px; background: radial-gradient(circle, #bbb 1px, transparent 1px) center / 3px 3px no-repeat; }
.small { height: 5px; }

.displays { flex: 1; min-height: 0; display: flex; flex-direction: column; }
.tree { flex: 1; min-height: 0; display: flex; background: #fff; border: solid #b0b0b0; border-width: 0 1px 1px; }
.tree-view { flex: 1; overflow: hidden; }
.tree table { width: 100%; border-spacing: 0; table-layout: fixed; }
.name-col { width: 332px; }
.tree td { height: 19px; padding: 0 2px; line-height: 19px; white-space: nowrap; }
.tree td:first-child { border-right: 1px solid #dcdcdc; }
.tree td.l1 { padding-left: 43px; --arrow: 26px; }
.tree td.l2 { padding-left: 63px; --arrow: 46px; }
.tree td.l3 { padding-left: 83px; --arrow: 66px; }
.open, .shut { position: relative; }
.open::before, .shut::before { content: ""; position: absolute; left: var(--arrow); top: 7px; border: 4px solid transparent; }
.open::before { border-top-color: #555; border-bottom: 0; }
.shut::before { margin-left: 2px; top: 5px; border-left-color: #555; border-right: 0; }
.selected { background: #308cc6; color: #fff; }
.tree .selected td:first-child { border-color: #308cc6; }
.selected .shut::before { border-left-color: #123; }
.tree input { appearance: none; display: block; width: 14px; height: 14px; border: 1px solid #b0b0b0; background: #fff; }
.tree input:checked::before { content: ""; display: block; width: 12px; height: 12px; background: #111; clip-path: polygon(15% 48%, 30% 42%, 44% 66%, 70% 8%, 86% 8%, 52% 92%, 38% 92%); }

.scrollbar { width: 14px; display: flex; flex-direction: column; border-left: 1px solid #b8b8b8; }
.step { height: 14px; display: grid; place-items: center; background: #f8f8f8; }
.step::before { content: ""; border: 4px solid transparent; }
.up::before { border-bottom-color: #555; border-top: 0; }
.down::before { border-top-color: #555; border-bottom: 0; }
.track { background: #e4e4e4; border: solid #b8b8b8; border-width: 1px 0; }
.before { flex: 125; }
.thumb { flex: 759; background: linear-gradient(90deg, #fff, #f0f0f0); }
.after { flex: 31; }

.description { flex: none; height: 78px; padding: 5px 4px; line-height: 17px; background: #fff; border: 1px solid #b0b0b0; }
.display-buttons { flex: none; display: grid; grid-template-columns: repeat(4, 1fr); gap: 6px; padding: 6px 2px 4px; }
.btn { height: 26px; padding: 0 6px; border: 1px solid #aaa; border-radius: 3px; background: linear-gradient(#fdfdfd, #ededed); line-height: 19px; }
.btn:disabled { border-color: #c6c6c6; color: #bfbfbf; }

.collapse { flex: none; width: 22px; padding: 0 0 0 6px; display: grid; place-items: center; border: 0; background: #efefef; }
.collapse i { border: 5px solid transparent; border-left: 0; border-right: 4px solid #444; }
.collapse.right { width: 15px; padding: 0; border: 1px solid #aaa; border-radius: 3px; background: #dcdcdc; }
.viewport { flex: 1; min-width: 0; background: #e1e1e1; }
.viewport svg { width: 100%; height: 100%; }
.labels { fill: #fff; font-family: "Liberation Sans", Arial, sans-serif; }
.fs50 { font-size: 50px; }
.fs48 { font-size: 48px; }
.fs46 { font-size: 46px; }
.fs44 { font-size: 44px; }
.fs40 { font-size: 40px; }
.fs36 { font-size: 36px; }

.time-row { display: flex; align-items: center; gap: 6px; padding: 6px 11px 9px; }
.time-row label { white-space: nowrap; }
.pause { width: 80px; margin-right: 9px; display: flex; align-items: center; justify-content: center; gap: 1px; }
.time-row select { appearance: none; width: 120px; height: 26px; margin-right: 9px; padding: 0 4px; border: 1px solid #aaa; border-radius: 3px; background: conic-gradient(from -45deg at 50% 100%, #555 90deg, transparent 0) right 7px center / 8px 4px no-repeat, linear-gradient(#fdfdfd, #ededed); background: linear-gradient(to bottom right, #555 50%, transparent 51%) right 7px center / 4px 4px no-repeat, linear-gradient(to bottom left, #555 50%, transparent 51%) right 11px center / 4px 4px no-repeat, linear-gradient(#fdfdfd, #ededed); }
.time-row input { flex: 1; min-width: 0; height: 26px; padding: 0 2px; border: 1px solid #aaa; border-radius: 3px; background: #fff; }

.status { flex: none; height: 27px; display: flex; align-items: center; gap: 6px; padding: 0 1px 2px 2px; }
.fps { margin-left: auto; padding-bottom: 5px; }
```
